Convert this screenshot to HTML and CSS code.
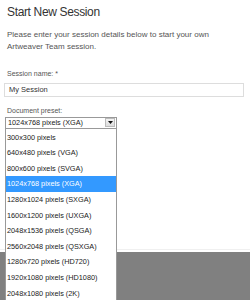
FILE: index.html
```html
<!DOCTYPE html>
<html>
<head>
<meta charset="utf-8">
<link rel="stylesheet" href="styles.css">
</head>
<body>
<div class="page">
  <div class="content">
    <h1 class="title">Start New Session</h1>
    <p class="intro">Please enter your session details below to start your own Artweaver Team session.</p>
    <label class="label">Session name: *</label>
    <div class="input">My Session</div>
    <label class="label label-preset">Document preset:</label>
    <div class="select-wrap">
      <div class="select">
        <span class="select-value">1024x768 pixels (XGA)</span>
        <span class="select-arrow"><svg width="5" height="3" viewBox="0 0 5 3"><path d="M0 0h5L2.5 3z" fill="#111"/></svg></span>
      </div>
      <ul class="options">
        <li class="option">300x300 pixels</li>
        <li class="option">640x480 pixels (VGA)</li>
        <li class="option">800x600 pixels (SVGA)</li>
        <li class="option option-selected">1024x768 pixels (XGA)</li>
        <li class="option">1280x1024 pixels (SXGA)</li>
        <li class="option">1600x1200 pixels (UXGA)</li>
        <li class="option">2048x1536 pixels (QSGA)</li>
        <li class="option">2560x2048 pixels (QSXGA)</li>
        <li class="option">1280x720 pixels (HD720)</li>
        <li class="option">1920x1080 pixels (HD1080)</li>
        <li class="option">2048x1080 pixels (2K)</li>
      </ul>
    </div>
  </div>
  <div class="footer"><div class="footer-shade"></div></div>
</div>
</body>
</html>
```
FILE: styles.css
```css
html, body {
  margin: 0;
  padding: 0;
  background: #fff;
}
body {
  font-family: "Liberation Sans", Arial, sans-serif;
  color: #555;
}
.page {
  height: 300px;
  display: flex;
  flex-direction: column;
  overflow: hidden;
}
.content {
  flex: 1;
  display: flex;
  flex-direction: column;
  align-items: flex-start;
  padding: 5px 6px 0 5px;
  position: relative;
  z-index: 2;
}
.title {
  margin: 0 0 0 2px;
  font-size: 12px;
  line-height: 14px;
  font-weight: normal;
  letter-spacing: -0.35px;
  color: #333;
}
.intro {
  margin: 9.7px 0 0 2px;
  font-size: 8px;
  line-height: 12px;
  color: #555;
  width: 215px;
}
.label {
  margin: 16.3px 0 0 2px;
  font-size: 7px;
  line-height: 10px;
  color: #555;
}
.label-preset {
  margin-top: 8.6px;
}
.input {
  margin-top: 4px;
  box-sizing: border-box;
  width: 240px;
  height: 14px;
  border: 1px solid #ddd;
  font-size: 7.5px;
  line-height: 12px;
  padding-left: 4px;
  color: #333;
  margin-left: -1px;
}
.select-wrap {
  position: relative;
  margin-top: 1px;
}
.select {
  box-sizing: border-box;
  width: 112px;
  height: 12px;
  border: 1px solid #999;
  display: flex;
  align-items: center;
  justify-content: space-between;
  padding: 0 1px 0 2px;
  font-size: 7.3px;
  color: #222;
}
.select-arrow {
  box-sizing: border-box;
  width: 10px;
  height: 9px;
  border: 1px solid #bbb;
  background: linear-gradient(#f4f4f4, #dcdcdc);
  display: flex;
  align-items: center;
  justify-content: center;
}
.options {
  position: absolute;
  top: 12px;
  left: 0;
  margin: 0;
  padding: 1px 0 0;
  list-style: none;
  box-sizing: border-box;
  width: 112px;
  background: #fff;
  border: 1px solid #999;
  border-top: none;
}
.option {
  height: 15.6px;
  line-height: 15.6px;
  font-size: 7.3px;
  padding-left: 1px;
  color: #222;
  white-space: nowrap;
}
.option-selected {
  background: #3399ff;
  color: #fff;
}
.footer {
  height: 48px;
  border-top: 1px solid #f0f0f0;
  padding-top: 2px;
  display: flex;
  flex-direction: column;
  position: relative;
  z-index: 1;
}
.footer-shade {
  flex: 1;
  background: #808080;
}
```
